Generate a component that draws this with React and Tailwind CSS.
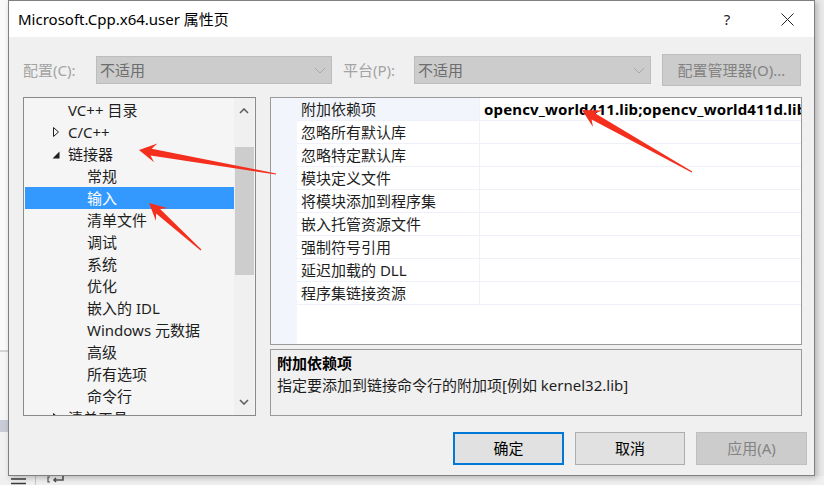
import React from "react";

const F = "font-['Noto_Sans','Noto_Sans_CJK_SC',sans-serif]";

function Arrow({ tip, tail, hl, hw, nw, tw }) {
  const [tx, ty] = tip;
  const [sx, sy] = tail;
  const dx = sx - tx, dy = sy - ty;
  const L = Math.hypot(dx, dy);
  const ux = dx / L, uy = dy / L;
  const nx = -uy, ny = ux;
  const p = (a, b) => [tx + ux * a + nx * b, ty + uy * a + ny * b];
  const pts = [p(0, 0), p(hl, hw / 2), p(hl * 0.72, nw / 2), p(L, tw / 2), p(L, -tw / 2), p(hl * 0.72, -nw / 2), p(hl, -hw / 2)];
  return <polygon points={pts.map((q) => q.map((v) => v.toFixed(1)).join(",")).join(" ")} fill="#f42f1e" />;
}

const treeItems = [
  { t: "VC++ 目录", l: 1 },
  { t: "C/C++", l: 1, tri: "open" },
  { t: "链接器", l: 1, tri: "exp" },
  { t: "常规", l: 2 },
  { t: "输入", l: 2, sel: true },
  { t: "清单文件", l: 2 },
  { t: "调试", l: 2 },
  { t: "系统", l: 2 },
  { t: "优化", l: 2 },
  { t: "嵌入的 IDL", l: 2 },
  { t: "Windows 元数据", l: 2 },
  { t: "高级", l: 2 },
  { t: "所有选项", l: 2 },
  { t: "命令行", l: 2 },
  { t: "清单工具", l: 1, tri: "open" },
];

const props = [
  "附加依赖项",
  "忽略所有默认库",
  "忽略特定默认库",
  "模块定义文件",
  "将模块添加到程序集",
  "嵌入托管资源文件",
  "强制符号引用",
  "延迟加载的 DLL",
  "程序集链接资源",
];

function Tri({ kind }) {
  if (kind === "open")
    return (
      <svg width="8" height="12" viewBox="0 0 8 12" className="shrink-0">
        <path d="M1.5 1.5 L6.5 6 L1.5 10.5 Z" fill="none" stroke="#1e1e1e" strokeWidth="1" />
      </svg>
    );
  return (
    <svg width="8" height="12" viewBox="0 0 8 12" className="shrink-0">
      <path d="M7.5 3.5 L7.5 10.5 L0.5 10.5 Z" fill="#1e1e1e" />
    </svg>
  );
}

function Chevron() {
  return (
    <svg width="12" height="7" viewBox="0 0 12 7">
      <path d="M1 1 L6 6 L11 1" fill="none" stroke="#a8a8a8" strokeWidth="1" />
    </svg>
  );
}

export default function App() {
  return (
    <div className={`w-[824px] h-[485px] overflow-hidden flex flex-col bg-[#f0f0f0] ${F} relative`}>
      <div className="flex h-[476px]">
        {/* left desktop strip */}
        <div className="w-[8px] flex flex-col">
          <div className="h-[350px] bg-[#fafafa]" />
          <div className="h-[2px] bg-[#d4d4d4]" />
          <div className="h-[68px] bg-[#f6f6f6]" />
          <div className="h-[12px] bg-[#c9ccd6]" />
          <div className="flex-1 bg-[#f2f2f2]" />
        </div>

        {/* dialog */}
        <div className="w-[807px] h-[476px] border border-[#808080] bg-[#f0f0f0] flex flex-col shadow-[2px_2px_6px_rgba(0,0,0,0.25)] z-10">
          {/* title bar */}
          <div className="h-[36px] bg-white flex items-center pl-[9px] text-[15px] text-black">
            <span className="leading-[20px]">Microsoft.Cpp.x64.user 属性页</span>
            <span className="ml-auto w-[40px] text-center leading-[20px] text-[15px] text-[#222]">?</span>
            <div className="w-[28px]" />
            <div className="w-[24px] flex items-center justify-center mr-[15px]">
              <svg width="13" height="13" viewBox="0 0 13 13">
                <path d="M0.5 0.5 L12.5 12.5 M12.5 0.5 L0.5 12.5" stroke="#222" strokeWidth="1" />
              </svg>
            </div>
          </div>

          {/* body */}
          <div className="flex-1 flex flex-col pt-[17px] pl-[14px] pr-[7px]">
            {/* config row */}
            <div className="flex items-center h-[32px] text-[15px]">
              <span className="w-[73px] text-[#a3a3a3] leading-[20px]">配置(C):</span>
              <div className="w-[236px] h-[28px] bg-[#cccccc] border border-[#bdbdbd] flex items-center pl-[3px] pr-[5px]">
                <span className="text-[#6d6d6d] leading-[20px]">不适用</span>
                <span className="ml-auto"><Chevron /></span>
              </div>
              <span className="ml-[11px] w-[71px] text-[#a3a3a3] leading-[20px]">平台(P):</span>
              <div className="w-[237px] h-[28px] bg-[#cccccc] border border-[#bdbdbd] flex items-center pl-[3px] pr-[5px]">
                <span className="text-[#6d6d6d] leading-[20px]">不适用</span>
                <span className="ml-auto"><Chevron /></span>
              </div>
              <div className="ml-[11px] w-[139px] h-[32px] bg-[#cccccc] border border-[#bdbdbd] flex items-center justify-center text-[#838383] leading-[20px]">
                配置管理器(O)...
              </div>
            </div>

            {/* panels */}
            <div className="flex mt-[11px] h-[319px]">
              {/* tree */}
              <div className="w-[233px] h-[319px] border border-[#8a8a8a] bg-[#f5f5f5] flex overflow-hidden">
                <div className="flex-1 flex flex-col pt-[1px] pl-[1px] overflow-hidden">
                  {treeItems.map((it, i) => (
                    <div
                      key={i}
                      className={`h-[22px] shrink-0 flex items-center text-[15px] leading-[22px] ${
                        it.sel ? "bg-[#3399ff] text-white" : "text-[#1e1e1e]"
                      }`}
                    >
                      {it.l === 1 ? (
                        <>
                          <div className="w-[35px] shrink-0 flex justify-end">{it.tri && <Tri kind={it.tri} />}</div>
                          <span className="pl-[8px] whitespace-nowrap">{it.t}</span>
                        </>
                      ) : (
                        <span className="pl-[62px] whitespace-nowrap">{it.t}</span>
                      )}
                    </div>
                  ))}
                </div>
                {/* scrollbar */}
                <div className="w-[20px] mr-[1px] bg-[#f0f0f0] flex flex-col items-center">
                  <div className="h-[24px] flex items-center justify-center pt-[1px]">
                    <svg width="10" height="6" viewBox="0 0 10 6">
                      <path d="M1 5 L5 1 L9 5" fill="none" stroke="#606060" strokeWidth="1.6" />
                    </svg>
                  </div>
                  <div className="mt-[25px] w-[19px] h-[128px] bg-[#cdcdcd]" />
                  <div className="flex-1" />
                  <div className="h-[24px] flex items-center justify-center mb-[1px]">
                    <svg width="10" height="6" viewBox="0 0 10 6">
                      <path d="M1 1 L5 5 L9 1" fill="none" stroke="#606060" strokeWidth="1.6" />
                    </svg>
                  </div>
                </div>
              </div>

              {/* right column */}
              <div className="ml-[14px] w-[532px] flex flex-col">
                <div className="h-[248px] border border-[#9a9a9a] bg-white flex overflow-hidden">
                  <div className="w-[26px] bg-[#f2f5fb]" />
                  <div className="flex-1 flex flex-col overflow-hidden">
                    {props.map((p, i) => (
                      <div key={i} className="h-[23px] shrink-0 flex border-b border-[#eef1f7]">
                        <div
                          className={`w-[183px] shrink-0 pl-[4px] text-[15px] leading-[22px] text-[#1e1e1e] border-r border-[#eef1f7] ${
                            i === 0 ? "bg-[#f2f5fb]" : "bg-white"
                          }`}
                        >
                          {p}
                        </div>
                        <div className="flex-1 pl-[4px] overflow-hidden whitespace-nowrap text-[15px] leading-[22px] font-bold text-black tracking-[0.15px]">
                          {i === 0 ? "opencv_world411.lib;opencv_world411d.lib" : ""}
                        </div>
                      </div>
                    ))}
                  </div>
                </div>
                <div className="mt-[4px] h-[67px] border border-[#9a9a9a] bg-[#f0f0f0] pl-[6px] pt-[3px] flex flex-col">
                  <span className="text-[15px] leading-[20px] font-bold text-black">附加依赖项</span>
                  <span className="text-[15px] leading-[20px] mt-[2px] text-[#1e1e1e]">指定要添加到链接命令行的附加项[例如 kernel32.lib]</span>
                </div>
              </div>
            </div>

            {/* buttons */}
            <div className="flex justify-end mt-[16px] gap-[11px]">
              <div className="w-[111px] h-[33px] border-2 border-[#0078d7] bg-[#e1e1e1] flex items-center justify-center text-[15px] text-black">
                确定
              </div>
              <div className="w-[110px] h-[33px] border border-[#adadad] bg-[#e1e1e1] flex items-center justify-center text-[15px] text-black">
                取消
              </div>
              <div className="w-[111px] h-[33px] border border-[#bfbfbf] bg-[#cccccc] flex items-center justify-center text-[15px] text-[#838383]">
                应用(A)
              </div>
            </div>
          </div>
        </div>

        {/* right desktop strip */}
        <div className="w-[9px] bg-[#e9e9e9]" />
      </div>

      {/* bottom desktop strip */}
      <div className="h-[9px] bg-[#f0f0f0] flex items-start">
        <div className="w-[11px]" />
        <svg width="16" height="9" viewBox="0 0 16 9">
          <path d="M0 3 H15 M0 7.5 H15" stroke="#3c3c3c" strokeWidth="1.5" />
        </svg>
        <div className="ml-[8px] w-[1px] h-[9px] bg-[#c8c8c8]" />
        <svg className="ml-[11px]" width="18" height="9" viewBox="0 0 18 9">
          <path d="M3 1 H1 V6 H3" fill="none" stroke="#555" strokeWidth="1.2" />
          <path d="M16 0 V4 H7 M9 2 L7 4 L9 6" fill="none" stroke="#555" strokeWidth="1.6" />
        </svg>
      </div>

      {/* red annotation arrows */}
      <svg className="absolute left-0 top-0 pointer-events-none z-20" width="824" height="485" viewBox="0 0 824 485">
        <Arrow tip={[139, 150]} tail={[276, 174]} hl={17} hw={19} nw={7} tw={1.2} />
        <Arrow tip={[149, 203]} tail={[201, 250]} hl={17} hw={17} nw={6} tw={1.2} />
        <Arrow tip={[582, 110]} tail={[692, 172]} hl={18} hw={19} nw={7} tw={1.2} />
      </svg>
    </div>
  );
}
